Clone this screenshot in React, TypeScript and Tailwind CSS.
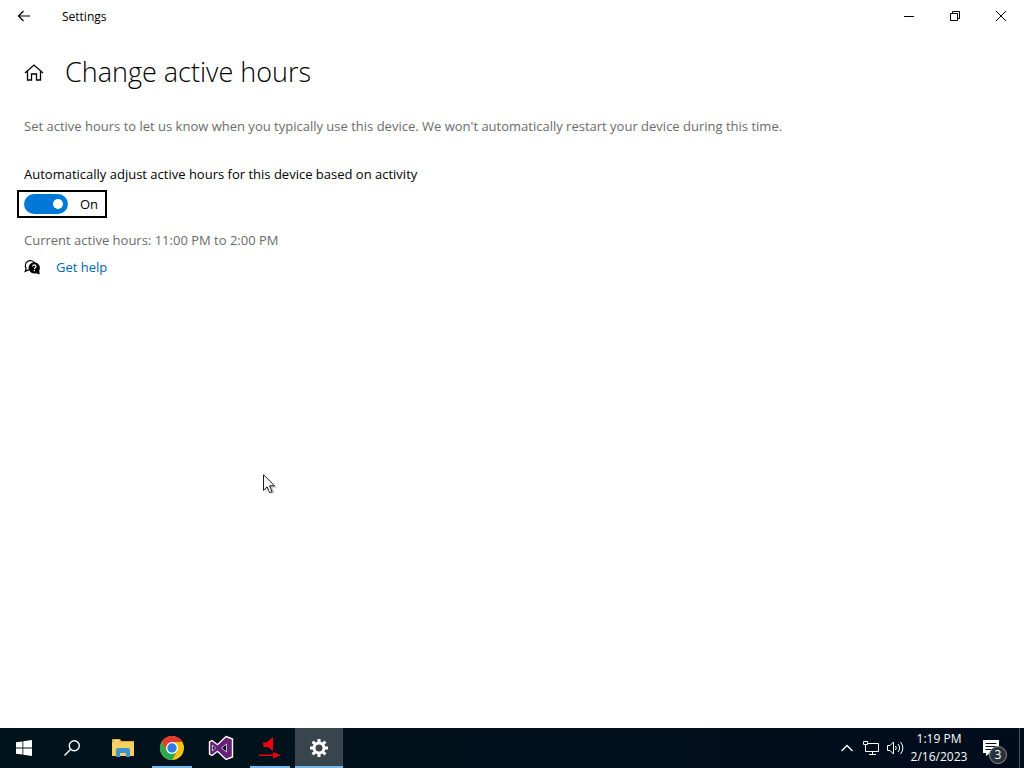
import React, { useState } from 'react';

// Window caption: back button, title, minimize / restore / close
function TitleBar() {
  return (
    <header className="flex h-8 items-center text-black">
      <button aria-label="Back" className="flex h-8 w-12 items-center justify-center">
        <svg width="14" height="12" viewBox="0 0 14 12" fill="none" stroke="currentColor" strokeWidth="1.2">
          <path d="M13 6H1.5M6.5 1L1.5 6l5 5" />
        </svg>
      </button>
      <span className="ml-3.5 flex-1 pt-0.5 text-xs">Settings</span>
      <button aria-label="Minimize" className="flex h-8 w-[46px] items-center justify-center">
        <svg width="10" height="10" viewBox="0 0 10 10" fill="none" stroke="currentColor">
          <path d="M0 5.5h10" />
        </svg>
      </button>
      <button aria-label="Restore" className="flex h-8 w-[46px] items-center justify-center">
        <svg width="10" height="10" viewBox="0 0 10 10" fill="none" stroke="currentColor">
          <path d="M.5 2.5h7v7h-7zM2.5 2.5v-2h7v7h-2" />
        </svg>
      </button>
      <button aria-label="Close" className="flex h-8 w-[46px] items-center justify-center">
        <svg width="10" height="10" viewBox="0 0 10 10" fill="none" stroke="currentColor">
          <path d="M0 0l10 10M10 0L0 10" />
        </svg>
      </button>
    </header>
  );
}

function ActiveHours() {
  const [auto, setAuto] = useState(true);

  return (
    <main className="flex flex-1 flex-col items-start px-6 pt-5 text-[13px] text-[#6b6b6b]">
      <div className="flex h-10 items-center gap-[21px] text-black">
        <button aria-label="Home">
          <svg width="20" height="20" viewBox="0 0 20 20" fill="none" stroke="currentColor" strokeWidth="1.3">
            <path d="M1 11L10 3l9 8M3.5 9v9h4v-6h5v6h4V9" />
          </svg>
        </button>
        <h1 className="text-[27px] leading-10 font-light">Change active hours</h1>
      </div>

      <p className="mt-6 leading-5">
        Set active hours to let us know when you typically use this device. We won't automatically restart your device
        during this time.
      </p>

      <label htmlFor="auto-adjust" className="mt-7 leading-5 text-black">
        Automatically adjust active hours for this device based on activity
      </label>
      <div className="mt-1.5 -ml-[7px] flex h-7 w-[90px] items-center gap-3 border-2 border-black pl-[5px] text-black">
        <input
          id="auto-adjust"
          type="checkbox"
          role="switch"
          checked={auto}
          onChange={(e) => setAuto(e.target.checked)}
          className="flex h-5 w-11 appearance-none items-center rounded-full bg-[#999999] px-[5px] before:size-2.5 before:rounded-full before:bg-white checked:justify-end checked:bg-[#0078d7]"
        />
        <span className="pt-0.5">{auto ? 'On' : 'Off'}</span>
      </div>

      <p className="mt-3 leading-5">Current active hours: 11:00 PM to 2:00 PM</p>

      <div className="mt-[7px] flex items-center gap-4">
        <svg width="16" height="16" viewBox="0 0 16 16">
          <path
            d="M5 10.6L1.2 12.4l.9-3A4.900 4.900 0 1 1 10.800 4"
            fill="none"
            stroke="#000"
            strokeWidth="1.2"
          />
          <path d="M10.2 3.2a5.7 5.7 0 0 1 5 8.4l.5 4-3.6-1.3a5.7 5.7 0 1 1-1.9-11.1z" fill="#000" />
          <path
            d="M8.7 7.4c0-2 3.3-2 3.3 0 0 1.4-1.6 1.3-1.6 2.7M10.4 11v1.200"
            fill="none"
            stroke="#fff"
            strokeWidth="1.2"
          />
        </svg>
        <a href="#help" className="leading-5 text-[#0066b4]">
          Get help
        </a>
      </div>
    </main>
  );
}

function TaskBar() {
  return (
    <footer className="flex h-10 items-stretch bg-linear-to-r from-[#00141c] to-[#000c1c] text-white">
      <button aria-label="Start" className="flex w-12 items-center justify-center">
        <svg width="16" height="16" viewBox="0 0 16 16" fill="currentColor">
          <path d="M0 2.3l6.5-.9v6.2H0zM7.3 1.3L16 0v7.6H7.3zM0 8.4h6.5v6.2L0 13.7zM7.3 8.4H16V16l-8.7-1.3z" />
        </svg>
      </button>
      <button aria-label="Search" className="flex w-12 items-center justify-center">
        <svg width="16" height="16" viewBox="0 0 16 16" fill="none" stroke="currentColor" strokeWidth="1.4">
          <circle cx="10.3" cy="5.7" r="5" />
          <path d="M6.7 9.3L.5 15.5" />
        </svg>
      </button>

      <nav className="ml-[3px] flex gap-px">
        <button aria-label="File Explorer" className="flex w-12 items-center justify-center">
          <svg width="22" height="20" viewBox="0 0 22 20">
            <path d="M0 1h8l1.5 2H22v14H0z" fill="#e8a92e" />
            <path d="M2 2h5.5v1.5H2z" fill="#fbe7a8" />
            <path d="M0 4h22v14H0z" fill="#f7d062" />
            <path d="M4 19v-7.5L5.5 10h11l1.5 1.5V19h-4v-4H8v4z" fill="#3d94cf" />
          </svg>
        </button>

        <button aria-label="Google Chrome" className="flex w-12 items-center justify-center">
          <span className="flex h-10 w-10 items-center justify-center border-b-2 border-[#76b9ed] pt-0.5">
            <svg width="24" height="24" viewBox="0 0 24 24">
              <circle cx="12" cy="12" r="12" fill="#fbc116" />
              <path d="M1.6 6A12 12 0 0 1 22.4 6H12l-5.2 9z" fill="#e33b2e" />
              <path d="M1.6 6A12 12 0 0 0 12 24l5.2-9H6.8z" fill="#2da94f" />
              <circle cx="12" cy="12" r="6" fill="#fff" />
              <circle cx="12" cy="12" r="4.7" fill="#2f7de1" />
            </svg>
          </span>
        </button>

        <button aria-label="Visual Studio" className="flex w-12 items-center justify-center">
          <svg width="26" height="26" viewBox="0 0 26 26">
            <path
              d="M18 1.5L24.5 4v18L18 24.5l-8.500-8.200L4 20.500 1.500 19V7L4 5.500l5.500 4.200z"
              fill="#68217a"
              stroke="#fff"
              strokeWidth="1.4"
            />
            <path d="M18.500 9L13.500 13l5 4zM4.500 10v6l3-3z" fill="#00111d" stroke="#fff" strokeWidth=".7" />
          </svg>
        </button>

        <button aria-label="Sound redirect" className="flex w-12 items-center justify-center">
          <span className="flex h-10 w-10 items-center justify-center border-b-2 border-[#76b9ed] pt-0.5">
            <svg width="22" height="22" viewBox="0 0 22 22" fill="#f0000f">
              <path d="M4 5.5h3.5L14 0v14L9 10H4.500zM0 17.500h14V15l8 3.200-8 3.300V19H0z" />
            </svg>
          </span>
        </button>

        <button
          aria-label="Settings"
          className="flex w-12 items-center justify-center border-b-2 border-[#76b9ed] bg-[#38454c] pt-0.5"
        >
          <svg width="18" height="18" viewBox="0 0 18 18" fill="none" stroke="currentColor">
            <circle cx="9" cy="9" r="5" strokeWidth="3" />
            <path
              d="M9 0v3M9 15v3M0 9h3M15 9h3M2.6 2.6l2.2 2.2M13.2 13.2l2.2 2.2M2.6 15.4l2.2-2.2M13.2 4.8l2.2-2.2"
              strokeWidth="3"
            />
          </svg>
        </button>
      </nav>

      <div className="ml-auto flex">
        <button aria-label="Show hidden icons" className="flex w-6 items-center justify-center">
          <svg width="12" height="8" viewBox="0 0 12 8" fill="none" stroke="currentColor" strokeWidth="1.3">
            <path d="M.5 7L6 1.5 11.5 7" />
          </svg>
        </button>
        <button aria-label="Network" className="flex w-6 items-center justify-center">
          <svg width="16" height="14" viewBox="0 0 16 14" fill="none" stroke="currentColor">
            <path d="M.5.5h4v3h-4zM2.5 3.5v7M4.5 2.5h11v8h-13M9.5 10.5v3M6 13.5h7" />
          </svg>
        </button>
        <button aria-label="Volume" className="flex w-6 items-center justify-center">
          <svg width="17" height="14" viewBox="0 0 17 14" fill="none" stroke="currentColor">
            <path d="M.5 4.500H3L6.500 1v12L3 9.500H.5zM8.500 5q1.600 2 0 4M11 3q3.200 4 0 8M13.500 1q4.800 6 0 12" />
          </svg>
        </button>
        <time className="flex w-16 flex-col items-center pt-0.5 text-xs leading-[18px]">
          <span>1:19 PM</span>
          <span>2/16/2023</span>
        </time>
        <button aria-label="3 new notifications" className="flex w-12 items-end justify-center pb-1">
          <span className="relative h-6 w-6">
            <svg width="16" height="16" viewBox="0 0 16 16">
              <path d="M0 0h16v13H7l-4 3v-3H0z" fill="#fff" />
              <path d="M2.5 3.5h11M2.5 6.5h11M2.5 9.5h7" stroke="#000c1c" />
            </svg>
            <span className="absolute right-0 bottom-0 flex size-[18px] items-center justify-center rounded-full border border-[#8a8f96] bg-[#2b323c] text-xs leading-none">
              3
            </span>
          </span>
        </button>
        <button aria-label="Show desktop" className="w-[5px] border-l border-[#4a5360]" />
      </div>
    </footer>
  );
}

function MousePointer() {
  return (
    <svg className="pointer-events-none absolute top-[474px] left-[263px]" width="14" height="22" viewBox="0 0 14 22">
      <path d="M2 3v15l4-3.5 2.5 5.5 3-1.3-2-5H14z" fill="#000" opacity=".2" />
      <path d="M.5.7v15.6l3.6-3.5 2.6 5.9 2.4-1-2.5-5.9h5z" fill="#fff" stroke="#000" strokeWidth=".9" />
    </svg>
  );
}

export default function App() {
  return (
    <div className="relative flex min-h-screen flex-col bg-white font-['Open_Sans','Noto_Sans',sans-serif]">
      <TitleBar />
      <ActiveHours />
      <TaskBar />
      <MousePointer />
    </div>
  );
}
